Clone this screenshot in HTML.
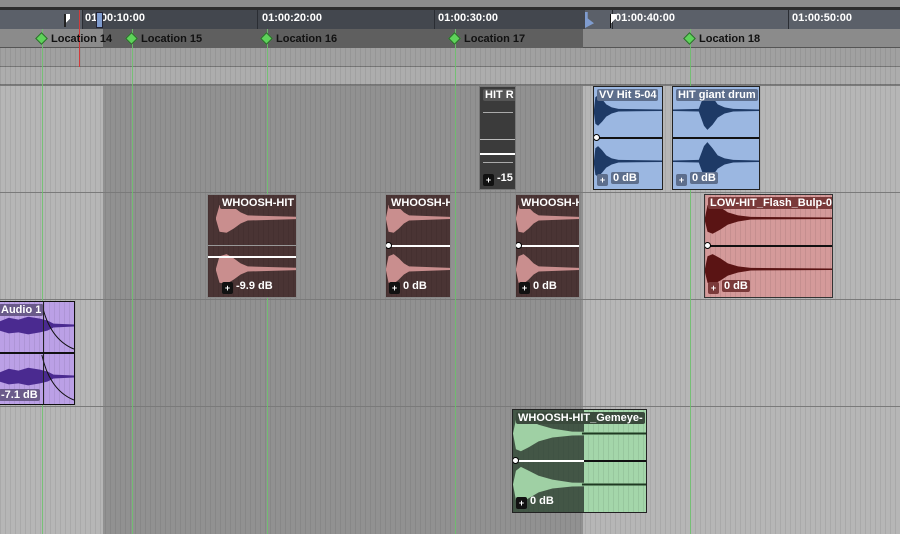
<!DOCTYPE html>
<html><head><meta charset="utf-8"><style>
*{margin:0;padding:0;box-sizing:border-box}
body{width:900px;height:534px;overflow:hidden;background:#b6b6b6;font-family:"Liberation Sans",sans-serif;position:relative}
.a{position:absolute}
.str{background-image:repeating-linear-gradient(90deg,rgba(0,0,0,.07) 0 1px,transparent 1px 5px)}
.tc{position:absolute;top:12px;color:#fff;font-weight:bold;font-size:11px}
.tick{position:absolute;top:10px;width:1px;height:19px;background:#2a2d33}
.loc{position:absolute;top:33px;font-weight:bold;font-size:11px;color:#111}
.dia{display:inline-block;width:9px;height:9px;background:#5ed35a;border:1px solid #2a6a2a;transform:rotate(45deg);margin-right:5px;vertical-align:-1px}
.g{position:absolute;width:1px;background:#6cc36c;top:29px;height:505px;opacity:.85}
.trk{position:absolute;left:0;width:900px;height:1px;background:#7a7a7a}
.clip{position:absolute;border:1px solid #222;overflow:hidden}
.ch{position:absolute;left:0;width:100%;height:50%}
.ch svg{position:absolute;left:0;top:0;width:100%;height:100%}
.sep{position:absolute;left:0;width:100%;height:2px;top:50%;margin-top:-1px}
.nm{position:absolute;left:3px;top:2px;font-weight:bold;font-size:11px;color:#fff;padding:0 2px;border-radius:2px;white-space:nowrap}
.gn{position:absolute;left:3px;bottom:3px;font-weight:bold;font-size:11px;color:#fff;white-space:nowrap}
.gn i{display:inline-block;width:11px;height:12px;background:#111;border-radius:2px;margin-right:3px;vertical-align:-2px;font-style:normal;font-size:9px;text-align:center;line-height:12px}
.gn span{padding:0 2px;border-radius:2px}
.gl{position:absolute;left:0;width:100%;height:2px;background:#fff;top:50%;margin-top:-1px}
.dot{position:absolute;left:-3px;top:50%;margin-top:-4px;width:7px;height:7px;border-radius:50%;background:#fff;border:1px solid #000}
</style></head><body>
<div class="a" style="left:0;top:0;width:900px;height:7px;background:#8d8d8d"></div>
<div class="a" style="left:0;top:7px;width:900px;height:3px;background:#2e2e2e"></div>
<div class="a" style="left:0;top:10px;width:900px;height:19px;background:#5b6069"></div>
<div class="a" style="left:82px;top:10px;width:503px;height:19px;background:#43474e"></div>
<div class="tick" style="left:82px"></div><div class="tick" style="left:257px"></div><div class="tick" style="left:434px"></div><div class="tick" style="left:612px"></div><div class="tick" style="left:788px"></div>
<div class="tc" style="left:85px">01:00:10:00</div>
<div class="tc" style="left:262px">01:00:20:00</div>
<div class="tc" style="left:438px">01:00:30:00</div>
<div class="tc" style="left:615px">01:00:40:00</div>
<div class="tc" style="left:792px">01:00:50:00</div>
<div class="a" style="left:64px;top:14px;width:6px;height:13px;border-left:2px solid #222;background:linear-gradient(135deg,#fff 50%,transparent 50%)"></div>
<div class="a" style="left:96px;top:12px;width:7px;height:16px;background:#7f9ccf;border:1px solid #223"></div>
<div class="a" style="left:585px;top:12px;width:9px;height:16px;background:#7f9ccf;clip-path:polygon(0 0,30% 0,30% 40%,100% 70%,0 100%)"></div>
<div class="a" style="left:610px;top:14px;width:6px;height:14px;border-left:1px solid #111;background:linear-gradient(135deg,#fff 50%,transparent 50%)"></div>
<div class="a" style="left:0;top:29px;width:900px;height:19px;background:#8b8b8b;border-bottom:1px solid #555"></div>
<div class="a" style="left:103px;top:29px;width:480px;height:19px;background:#5f5f5f"></div>
<div class="a" style="left:0;top:48px;width:900px;height:19px;background:#a1a1a1;border-bottom:1px solid #777"></div>
<div class="a" style="left:0;top:67px;width:900px;height:18px;background:#adadad;border-bottom:1px solid #777"></div>
<div class="a str" style="left:0;top:48px;width:900px;height:486px"></div>
<div class="a" style="left:103px;top:85px;width:480px;height:449px;background:rgba(0,0,0,.2)"></div>
<div class="trk" style="top:85px"></div><div class="trk" style="top:192px"></div><div class="trk" style="top:299px"></div><div class="trk" style="top:406px"></div>
<div class="g" style="left:42px"></div><div class="g" style="left:132px"></div><div class="g" style="left:267px"></div><div class="g" style="left:455px"></div><div class="g" style="left:690px"></div>
<div class="a" style="left:79px;top:10px;width:1px;height:57px;background:#d23a3a"></div>
<div class="loc" style="left:37px"><span class="dia"></span>Location 14</div>
<div class="loc" style="left:127px"><span class="dia"></span>Location 15</div>
<div class="loc" style="left:262px"><span class="dia"></span>Location 16</div>
<div class="loc" style="left:450px"><span class="dia"></span>Location 17</div>
<div class="loc" style="left:685px"><span class="dia"></span>Location 18</div>

<svg width="0" height="0" style="position:absolute"><defs>
<symbol id="w" viewBox="0 0 100 50" preserveAspectRatio="none"><path d="M0 22 L2 10 L6 8 L12 12 L18 17 L26 20 L36 21.5 L100 22 L100 23.5 L36 24 L26 26 L18 29 L12 34 L6 38 L2 36 L0 26 Z"/></symbol>
<symbol id="p" viewBox="0 0 100 50" preserveAspectRatio="none"><path d="M0 22 L4 10 L12 8 L20 12 L28 17 L36 20 L100 21.5 L100 23.5 L36 25 L28 28 L20 33 L12 37 L4 36 L0 24 Z"/></symbol>
<symbol id="d" viewBox="0 0 100 50" preserveAspectRatio="none"><path d="M0 22 L30 21.5 L36 8 L40 4 L46 10 L52 17 L60 20 L70 21.5 L100 22 L100 23.5 L70 24 L60 26 L52 30 L46 37 L40 42 L36 38 L30 24 L0 23.5 Z"/></symbol>
</defs></svg>

<div class="clip" style="left:479px;top:86px;width:37px;height:104px;background:#3b3b3b;border-color:#777">
<div class="a" style="left:3px;top:25px;width:30px;height:1px;background:#aaa"></div>
<div class="a" style="left:0;top:52px;width:37px;height:1px;background:#bbb"></div>
<div class="a" style="left:0;top:66px;width:37px;height:2px;background:#fff"></div>
<div class="a" style="left:3px;top:75px;width:30px;height:1px;background:#aaa"></div>
<div class="nm" style="background:#555">HIT R</div><div class="gn"><i>+</i>-15</div></div>

<div class="clip" style="left:593px;top:86px;width:70px;height:104px;background:#9bb7e1;fill:#1e3a66">
<div class="ch" style="top:0"><svg><use href="#w"/></svg></div><div class="ch" style="top:50%"><svg><use href="#w"/></svg></div>
<div class="sep" style="background:#111"></div>
<div class="nm" style="background:#5d6e8c">VV Hit 5-04</div><div class="gn"><i style="background:#5d6e8c">+</i><span style="background:#5d6e8c">0 dB</span></div><div class="dot" style="left:-1px"></div></div>
<div class="clip" style="left:672px;top:86px;width:88px;height:104px;background:#9bb7e1;fill:#1e3a66">
<div class="ch" style="top:0"><svg><use href="#d"/></svg></div><div class="ch" style="top:50%"><svg><use href="#d"/></svg></div>
<div class="sep" style="background:#111"></div>
<div class="nm" style="background:#5d6e8c">HIT giant drum</div><div class="gn"><i style="background:#5d6e8c">+</i><span style="background:#5d6e8c">0 dB</span></div></div>

<div class="clip str" style="left:207px;top:194px;width:90px;height:104px;background-color:#4a3434;fill:#c98e8e;border-color:#888">
<div class="ch" style="top:0;left:8px"><svg><use href="#p"/></svg></div><div class="ch" style="top:50%;left:8px"><svg><use href="#p"/></svg></div>
<div class="a" style="left:0;top:50px;width:100%;height:1px;background:#999"></div>
<div class="gl" style="top:62px"></div>
<div class="nm" style="left:12px;background:#4a3434">WHOOSH-HIT</div><div class="gn" style="left:14px"><i>+</i>-9.9 dB</div></div>
<div class="clip str" style="left:385px;top:194px;width:66px;height:104px;background-color:#4a3434;fill:#c98e8e;border-color:#888">
<div class="ch" style="top:0"><svg><use href="#p"/></svg></div><div class="ch" style="top:50%"><svg><use href="#p"/></svg></div>
<div class="gl"></div><div class="dot" style="left:-1px"></div>
<div class="nm" style="background:#4a3434">WHOOSH-HIT</div><div class="gn"><i>+</i>0 dB</div></div>
<div class="clip str" style="left:515px;top:194px;width:65px;height:104px;background-color:#4a3434;fill:#c98e8e;border-color:#888">
<div class="ch" style="top:0"><svg><use href="#p"/></svg></div><div class="ch" style="top:50%"><svg><use href="#p"/></svg></div>
<div class="gl"></div><div class="dot" style="left:-1px"></div>
<div class="nm" style="background:#4a3434">WHOOSH-HIT</div><div class="gn"><i>+</i>0 dB</div></div>
<div class="clip str" style="left:704px;top:194px;width:129px;height:104px;background-color:#d49a9a;fill:#5a1414;border-color:#333">
<div class="ch" style="top:0"><svg><use href="#w"/></svg></div><div class="ch" style="top:50%"><svg><use href="#w"/></svg></div>
<div class="sep" style="background:#111"></div><div class="dot" style="left:-1px"></div>
<div class="nm" style="background:#7a3a3a">LOW-HIT_Flash_Bulp-01</div><div class="gn"><i style="background:#7a3a3a">+</i><span style="background:#7a3a3a">0 dB</span></div></div>

<div class="clip str" style="left:-2px;top:301px;width:77px;height:104px;background-color:#bba0e6;fill:#4a2a90;border-color:#111">
<div class="ch" style="top:0"><svg viewBox="0 0 77 52" preserveAspectRatio="none"><path d="M0 20 L10 16 L20 18 L30 15 L42 17 L50 19 L56 22 L77 23 L77 25 L56 26 L50 29 L42 31 L30 33 L20 31 L10 32 L0 29 Z"/><path d="M44 2 Q52 38 77 48" stroke="#111" fill="none"/></svg></div>
<div class="ch" style="top:50%"><svg viewBox="0 0 77 52" preserveAspectRatio="none"><path d="M0 20 L10 16 L20 18 L30 15 L42 17 L50 19 L56 22 L77 23 L77 25 L56 26 L50 29 L42 31 L30 33 L20 31 L10 32 L0 29 Z"/><path d="M44 2 Q52 38 77 48" stroke="#111" fill="none"/></svg></div>
<div class="a" style="left:44px;top:0;width:1px;height:100%;background:#222"></div>
<div class="sep" style="background:#111"></div>
<div class="nm" style="left:0;background:#6a5a8a">Audio 1</div><div class="gn" style="left:0"><span style="background:#6a5a8a">-7.1 dB</span></div></div>

<div class="clip" style="left:512px;top:409px;width:135px;height:104px;background:#a4d6aa;border-color:#222">
<div class="a str" style="left:0;top:0;width:100%;height:100%"></div>
<div class="a" style="left:0;top:0;width:71px;height:100%;background:rgba(40,50,42,.78)"></div>
<div class="ch" style="top:0"><svg viewBox="0 0 135 52" preserveAspectRatio="none"><path d="M0 24 L3 10 L8 6 L16 10 L26 15 L40 19 L60 22 L135 23 L135 25 L60 26 L40 28 L26 32 L16 38 L8 42 L3 40 Z" fill="#9fd0a4"/><path d="M70 24 L135 24" stroke="#1f3a22" stroke-width="2"/></svg></div>
<div class="ch" style="top:50%"><svg viewBox="0 0 135 52" preserveAspectRatio="none"><path d="M0 24 L3 10 L8 6 L16 10 L26 15 L40 19 L60 22 L135 23 L135 25 L60 26 L40 28 L26 32 L16 38 L8 42 L3 40 Z" fill="#9fd0a4"/><path d="M70 24 L135 24" stroke="#1f3a22" stroke-width="2"/></svg></div>
<div class="sep" style="background:#111"></div><div class="a" style="left:0;top:49%;width:71px;height:2px;background:#fff"></div><div class="dot" style="left:-1px"></div>
<div class="nm" style="background:#3a4a3c">WHOOSH-HIT_Gemeye-</div><div class="gn"><i>+</i>0 dB</div></div>
</body></html>
